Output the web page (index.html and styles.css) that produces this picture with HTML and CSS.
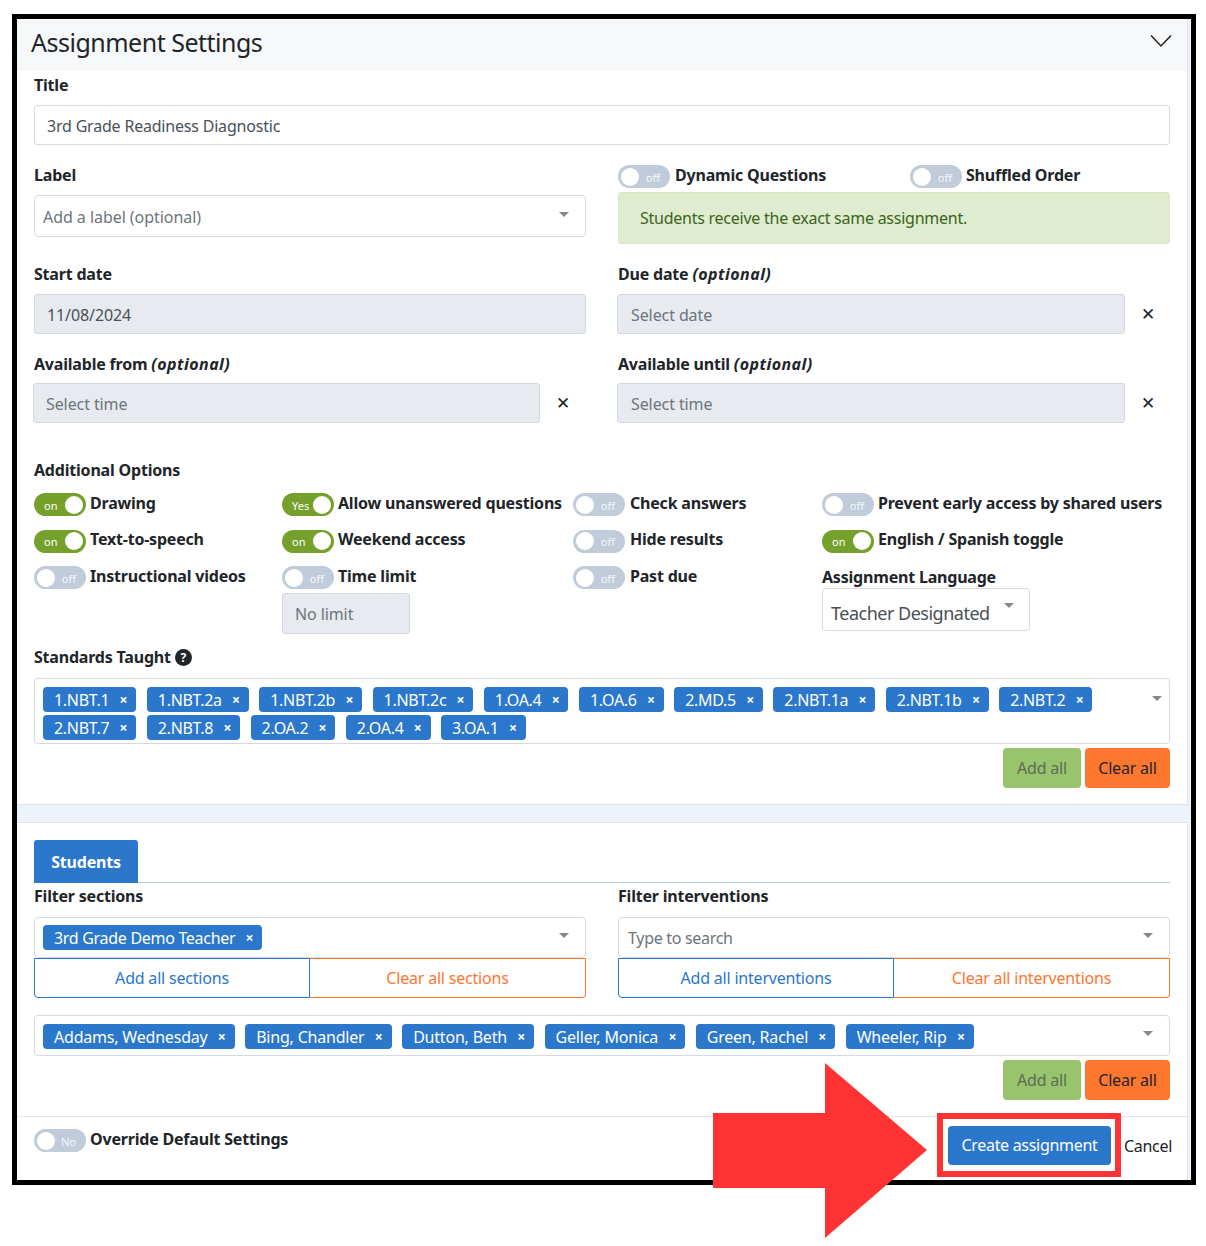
FILE: index.html
```html
<!DOCTYPE html>
<html lang="en">
<head>
<meta charset="utf-8">
<title>Assignment Settings</title>
<link rel="stylesheet" href="styles.css">
</head>
<body>
<div class="frame">
  <section class="card card-top">
    <header class="card-head">
      <h1>Assignment Settings</h1>
      <svg class="chevron" width="22" height="14" viewBox="0 0 22 14"><path d="M1 1.5 11 12 21 1.5" fill="none" stroke="#222" stroke-width="1.5"/></svg>
    </header>
    <div class="card-body">
      <label class="lbl">Title</label>
      <div class="input input-title">3rd Grade Readiness Diagnostic</div>

      <div class="two r-gap">
        <div>
          <label class="lbl">Label</label>
          <div class="select select-label"><span class="ph">Add a label (optional)</span><i class="caret"></i></div>
        </div>
        <div>
          <div class="toggle-row">
            <div class="opt opt-dyn"><span class="tg off"><b></b><em>off</em></span><span class="opt-t">Dynamic Questions</span></div>
            <div class="opt"><span class="tg off"><b></b><em>off</em></span><span class="opt-t">Shuffled Order</span></div>
          </div>
          <div class="alert">Students receive the exact same assignment.</div>
        </div>
      </div>

      <div class="two r-gap">
        <div>
          <label class="lbl">Start date</label>
          <div class="input dis">11/08/2024</div>
        </div>
        <div>
          <label class="lbl">Due date <i>(optional)</i></label>
          <div class="clearable"><div class="input dis ph">Select date</div><span class="x">✕</span></div>
        </div>
      </div>

      <div class="two r-gap">
        <div>
          <label class="lbl">Available from <i>(optional)</i></label>
          <div class="clearable tight"><div class="input dis ph">Select time</div><span class="x">✕</span></div>
        </div>
        <div>
          <label class="lbl">Available until <i>(optional)</i></label>
          <div class="clearable tight"><div class="input dis ph">Select time</div><span class="x">✕</span></div>
        </div>
      </div>

      <label class="lbl lbl-add">Additional Options</label>
      <div class="options">
        <div class="col">
          <div class="opt"><span class="tg on"><em>on</em><b></b></span><span class="opt-t">Drawing</span></div>
          <div class="opt"><span class="tg on"><em>on</em><b></b></span><span class="opt-t">Text-to-speech</span></div>
          <div class="opt"><span class="tg off"><b></b><em>off</em></span><span class="opt-t">Instructional videos</span></div>
        </div>
        <div class="col">
          <div class="opt"><span class="tg on"><em>Yes</em><b></b></span><span class="opt-t">Allow unanswered questions</span></div>
          <div class="opt"><span class="tg on"><em>on</em><b></b></span><span class="opt-t">Weekend access</span></div>
          <div class="opt"><span class="tg off"><b></b><em>off</em></span><span class="opt-t">Time limit</span></div>
          <div class="input dis ph nolimit">No limit</div>
        </div>
        <div class="col col-3">
          <div class="opt"><span class="tg off"><b></b><em>off</em></span><span class="opt-t">Check answers</span></div>
          <div class="opt"><span class="tg off"><b></b><em>off</em></span><span class="opt-t">Hide results</span></div>
          <div class="opt"><span class="tg off"><b></b><em>off</em></span><span class="opt-t">Past due</span></div>
        </div>
        <div class="col">
          <div class="opt"><span class="tg off"><b></b><em>off</em></span><span class="opt-t">Prevent early access by shared users</span></div>
          <div class="opt"><span class="tg on"><em>on</em><b></b></span><span class="opt-t">English / Spanish toggle</span></div>
          <div class="lang-lbl">Assignment Language</div>
          <div class="select lang"><span>Teacher Designated</span><i class="caret"></i></div>
        </div>
      </div>

      <label class="lbl lbl-std">Standards Taught <span class="help">?</span></label>
      <div class="tagbox">
        <div class="tags">
          <span class="tag">1.NBT.1<u>×</u></span>
          <span class="tag">1.NBT.2a<u>×</u></span>
          <span class="tag">1.NBT.2b<u>×</u></span>
          <span class="tag">1.NBT.2c<u>×</u></span>
          <span class="tag">1.OA.4<u>×</u></span>
          <span class="tag">1.OA.6<u>×</u></span>
          <span class="tag">2.MD.5<u>×</u></span>
          <span class="tag">2.NBT.1a<u>×</u></span>
          <span class="tag">2.NBT.1b<u>×</u></span>
          <span class="tag">2.NBT.2<u>×</u></span>
          <span class="tag">2.NBT.7<u>×</u></span>
          <span class="tag">2.NBT.8<u>×</u></span>
          <span class="tag">2.OA.2<u>×</u></span>
          <span class="tag">2.OA.4<u>×</u></span>
          <span class="tag">3.OA.1<u>×</u></span>
        </div>
        <i class="caret"></i>
      </div>
      <div class="actions">
        <span class="btn add">Add all</span>
        <span class="btn clear">Clear all</span>
      </div>
    </div>
  </section>

  <section class="card card-bottom">
    <div class="card-body body2">
      <div class="tabs"><span class="tab">Students</span></div>
      <div class="two">
        <div>
          <label class="lbl">Filter sections</label>
          <div class="select sel-tag"><span class="tag">3rd Grade Demo Teacher<u>×</u></span><i class="caret"></i></div>
          <div class="group"><span class="g-add">Add all sections</span><span class="g-clear">Clear all sections</span></div>
        </div>
        <div>
          <label class="lbl">Filter interventions</label>
          <div class="select sel-tag"><span class="ph type">Type to search</span><i class="caret"></i></div>
          <div class="group"><span class="g-add">Add all interventions</span><span class="g-clear">Clear all interventions</span></div>
        </div>
      </div>
      <div class="tagbox box-students">
        <div class="tags">
          <span class="tag">Addams, Wednesday<u>×</u></span>
          <span class="tag">Bing, Chandler<u>×</u></span>
          <span class="tag">Dutton, Beth<u>×</u></span>
          <span class="tag">Geller, Monica<u>×</u></span>
          <span class="tag">Green, Rachel<u>×</u></span>
          <span class="tag">Wheeler, Rip<u>×</u></span>
        </div>
        <i class="caret"></i>
      </div>
      <div class="actions">
        <span class="btn add">Add all</span>
        <span class="btn clear">Clear all</span>
      </div>
    </div>
    <footer class="foot">
      <div class="opt foot-opt"><span class="tg off"><b></b><em>No</em></span><span class="opt-t">Override Default Settings</span></div>
      <div class="foot-right">
        <span class="create">Create assignment</span>
        <span class="cancel">Cancel</span>
      </div>
    </footer>
  </section>
</div>
<div class="callout-box"></div>
<svg class="callout-arrow" width="216" height="176" viewBox="0 0 216 176"><path d="M0 50H112V0L214 87 112 175V125H0Z" fill="#ff3333"/></svg>
</body>
</html>
```
FILE: styles.css
```css
* { box-sizing: border-box; }
html, body { margin: 0; padding: 0; }
body {
  position: relative;
  height: 1246px;
  background: #fff;
  font-family: "Noto Sans", "Open Sans", sans-serif;
  font-size: 16px;
  letter-spacing: -0.2px;
  color: #212529;
  overflow: hidden;
}
.frame {
  margin: 14px 10px 0 12px;
  width: 1184px;
  height: 1171px;
  border: 5px solid #000;
  background: #eef2fa;
  overflow: hidden;
}
.card {
  background: #fff;
  margin-right: 3px;
  border-right: 1px solid #dfe3ea;
}
.card-top { height: 786px; border-bottom: 1px solid #dfe3ea; }
.card-bottom { margin-top: 17px; height: 358px; border-top: 1px solid #dfe3ea; }
.card-head {
  height: 52px;
  background: #f7f8fa;
  display: flex;
  align-items: center;
  justify-content: space-between;
  padding: 0 15px 0 14px;
}
.card-head h1 {
  margin: -6px 0 0;
  font-size: 25px;
  font-weight: 400;
  letter-spacing: -0.5px;
  color: #212529;
}
.chevron { margin-top: -8px; }
.card-body { padding: 2px 17px 0; }
.lbl {
  display: block;
  height: 24px;
  line-height: 24px;
  font-weight: 700;
  font-size: 16px;
  margin-bottom: 8px;
  white-space: nowrap;
}
.lbl i { letter-spacing: 0.45px; }
.two { display: grid; grid-template-columns: 552px 552px; column-gap: 32px; }
.r-gap { margin-top: 18px; }
.input {
  height: 40px;
  border: 1px solid #d5dae2;
  border-radius: 3px;
  padding: 0 12px;
  line-height: 40px;
  background: #fff;
  color: #495057;
}
.dis { background: #e7eaee; border-color: #d3d8df; letter-spacing: -0.1px; }
.ph { color: #6c757d; }
.select {
  position: relative;
  display: flex;
  align-items: center;
  justify-content: space-between;
  border: 1px solid #d5dae2;
  border-radius: 4px;
  background: #fff;
}
.select-label { height: 42px; padding: 1px 16px 0 8px; letter-spacing: -0.05px; }
.caret {
  display: block;
  flex: none;
  width: 0;
  height: 0;
  border-left: 5px solid transparent;
  border-right: 5px solid transparent;
  border-top: 5px solid #888;
}
.select-label .caret { margin-top: -5px; }
.toggle-row { display: flex; height: 25px; margin-top: 2px; }
.opt { display: flex; align-items: center; height: 23px; gap: 4px; white-space: nowrap; }
.opt-dyn { width: 292px; gap: 5px; }
.opt-t { font-weight: 700; font-size: 16px; margin-top: -4px; }
.toggle-row .opt-t { margin-top: -3px; }
.col-3 .opt { gap: 5px; }
.tg {
  flex: none;
  width: 52px;
  height: 23px;
  border-radius: 12px;
  display: flex;
  align-items: center;
  justify-content: space-between;
  padding: 0 3px;
  letter-spacing: 0;
}
.tg b { display: block; width: 18px; height: 18px; border-radius: 50%; background: #fff; }
.tg em { font-style: normal; font-size: 11px; color: #fff; line-height: 1; }
.tg.off { background: #c0ccda; padding-right: 10px; padding-left: 3px; }
.tg.on { background: #75a02c; padding-left: 10px; }
.tg.off em { opacity: .85; margin-top: 1px; }
.tg.on em { margin-top: 1px; }
.alert {
  margin-top: 2px;
  height: 52px;
  line-height: 51px;
  padding: 0 21px;
  background: #dfecd0;
  border: 1px solid #d8e8c6;
  border-radius: 3px;
  color: #3c641b;
  letter-spacing: -0.25px;
}
.clearable { display: flex; align-items: center; margin-left: -1px; }
.clearable .input { width: 507px; flex: none; }
.two > div + div .clearable .input { width: 508px; padding-left: 13px; }
.two > div + div .x { width: 45px; }
.tight { margin-top: -1px; }
.x { width: 46px; text-align: center; font-size: 17px; line-height: 1; margin-top: -2px; color: #212529; }
.lbl-add { margin: 35px 0 11px; }
.options { display: grid; grid-template-columns: 248px 291px 249px 348px; height: 141px; }
.col { display: flex; flex-direction: column; gap: 13.6px; }
.nolimit { width: 128px; height: 41px; margin-top: -9.6px; }
.lang-lbl { font-weight: 700; height: 23px; line-height: 22px; }
.lang {
  width: 208px;
  height: 43px;
  margin-top: -14.6px;
  padding: 6px 15px 0 8px;
  font-size: 18px;
  letter-spacing: -0.5px;
  color: #495057;
}
.lang .caret { margin-top: -14px; }
.lbl-std { margin: 11px 0 9px; display: flex; align-items: center; gap: 4px; }
.help {
  display: inline-block;
  width: 17px;
  height: 17px;
  border-radius: 50%;
  background: #212529;
  color: #fff;
  font-size: 12px;
  line-height: 17px;
  text-align: center;
}
.tagbox {
  display: flex;
  align-items: flex-start;
  height: 66px;
  border: 1px solid #d5dae2;
  border-radius: 4px;
  padding: 8px 7px 0 8px;
}
.tagbox .caret { margin-top: 9px; }
.tags { flex: 1; display: flex; flex-wrap: wrap; column-gap: 10.5px; row-gap: 3px; }
.tag {
  display: inline-flex;
  align-items: center;
  height: 25px;
  padding: 0 9px 0 11px;
  background: #2a77cc;
  border-radius: 4px;
  color: #fff;
  font-size: 16px;
  letter-spacing: -0.3px;
  white-space: nowrap;
}
.tag u { text-decoration: none; font-size: 14px; font-weight: 700; margin-left: 10.3px; }
.actions { display: flex; justify-content: flex-end; gap: 4px; margin-top: 4px; }
.btn {
  height: 40px;
  line-height: 40px;
  text-align: center;
  border-radius: 4px;
}
.add { width: 78px; background: #98c46e; color: #5d6b53; }
.clear { width: 85px; background: #ff762f; color: #212529; }
.body2 { padding-top: 17px; }
.tabs { height: 43px; border-bottom: 1px solid #b9c8de; margin-bottom: 1px; }
.tab {
  display: block;
  width: 104px;
  height: 43px;
  line-height: 44px;
  text-align: center;
  background: #2a77cc;
  color: #fff;
  font-weight: 700;
  border-radius: 3px 3px 0 0;
}
.lbl + .sel-tag { margin-top: 9px; }
.sel-tag { height: 41px; padding: 0 16px 0 8px; }
.sel-tag .caret { margin-top: -4px; }
.type { margin-left: 1px; letter-spacing: -0.3px; }
.group { display: flex; height: 40px; }
.group span { width: 50%; text-align: center; line-height: 39px; border: 1px solid; }
.g-add { color: #2a77cc; border-color: #2a77cc; border-radius: 0 0 0 4px; }
.g-clear { color: #ff762f; border-color: #ff762f; border-left: 0 !important; border-radius: 0 0 4px 0; }
.box-students { margin-top: 17px; height: 41px; padding-right: 16px; }
.box-students .caret { margin-top: 7px; }
.box-students .tag { letter-spacing: -0.2px; }
.foot {
  margin-top: 16px;
  border-top: 1px solid #e3e6ea;
  padding: 0 15px 0 17px;
  display: flex;
  justify-content: space-between;
}
.foot-opt { margin-top: 12px; }
.foot-right { display: flex; align-items: center; gap: 13px; margin-top: 9px; height: 39px; }
.create {
  width: 163px;
  height: 39px;
  line-height: 39px;
  text-align: center;
  background: #2a77cc;
  color: #fff;
  border-radius: 4px;
  letter-spacing: -0.3px;
}
.cancel { color: #212529; letter-spacing: -0.3px; }
.callout-box {
  position: absolute;
  left: 937px;
  top: 1113px;
  width: 184px;
  height: 64px;
  border: 6px solid #ff3333;
}
.callout-arrow { position: absolute; left: 713px; top: 1063px; }
```
